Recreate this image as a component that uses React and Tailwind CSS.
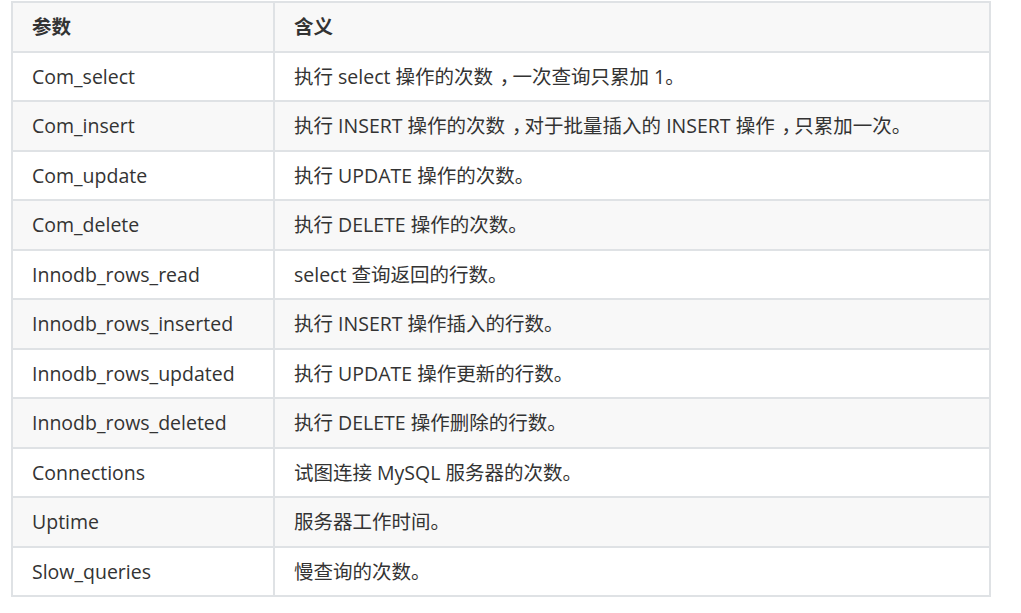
const rows = [
  ['Com_select', '执行 select 操作的次数，一次查询只累加 1。'],
  ['Com_insert', '执行 INSERT 操作的次数，对于批量插入的 INSERT 操作，只累加一次。'],
  ['Com_update', '执行 UPDATE 操作的次数。'],
  ['Com_delete', '执行 DELETE 操作的次数。'],
  ['Innodb_rows_read', 'select 查询返回的行数。'],
  ['Innodb_rows_inserted', '执行 INSERT 操作插入的行数。'],
  ['Innodb_rows_updated', '执行 UPDATE 操作更新的行数。'],
  ['Innodb_rows_deleted', '执行 DELETE 操作删除的行数。'],
  ['Connections', '试图连接 MySQL 服务器的次数。'],
  ['Uptime', '服务器工作时间。'],
  ['Slow_queries', '慢查询的次数。'],
];

// the full-width comma sits centred in its box in the reference
function Desc({ text }) {
  const parts = text.split('，');
  return parts.map((p, i) => (
    <span key={i}>
      {p}
      {i < parts.length - 1 && (
        <span className="pl-[0.35em] tracking-[-0.35em]">，</span>
      )}
    </span>
  ));
}

export default function App() {
  return (
    <div
      className="w-[1021px] h-[613px] bg-white pt-px pl-[11px] text-[#333333] text-[19.5px]"
      style={{ fontFamily: "'Open Sans', 'Noto Sans CJK SC', sans-serif" }}
    >
      <table className="border-separate border-spacing-[2px] bg-[#dfe2e5]">
        <thead>
          <tr className="bg-[#f8f8f8]">
            <th className="w-[260px] h-[47.5px] px-[19px] text-left font-bold">参数</th>
            <th className="w-[714px] h-[47.5px] px-[19px] text-left font-bold">含义</th>
          </tr>
        </thead>
        <tbody>
          {rows.map(([name, desc], i) => (
            <tr key={name} className={i % 2 === 1 ? 'bg-[#f8f8f8]' : 'bg-white'}>
              <td className="h-[47.5px] px-[19px] whitespace-nowrap">{name}</td>
              <td className="h-[47.5px] px-[19px] whitespace-nowrap">
                <Desc text={desc} />
              </td>
            </tr>
          ))}
        </tbody>
      </table>
    </div>
  );
}
